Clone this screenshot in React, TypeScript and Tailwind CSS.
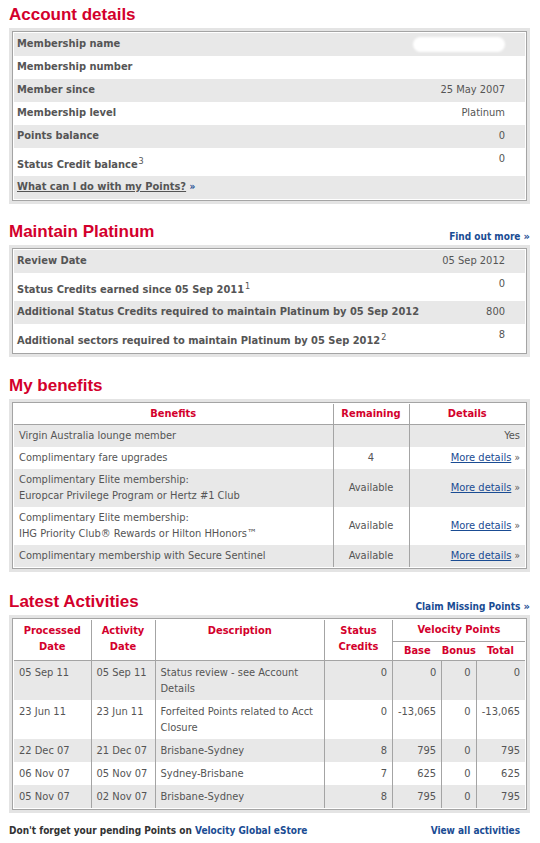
import type { ReactNode } from "react";

const font = { fontFamily: '"DejaVu Sans Condensed", "DejaVu Sans", Tahoma, sans-serif' };

function Heading({ children, link }: { children: ReactNode; link?: string }) {
  return (
    <div className="flex items-end justify-between">
      <h2 className="text-[17px] font-bold leading-5 text-[#d3002c]" style={{ fontFamily: '"Liberation Sans", Arial, sans-serif' }}>
        {children}
      </h2>
      {link && (
        <a className="mb-[-3px] text-[10px] font-bold text-[#1a4c93]">
          {link} <span className="text-[11px]">»</span>
        </a>
      )}
    </div>
  );
}

function Frame({ children }: { children: ReactNode }) {
  return (
    <div className="mt-[3px] bg-[#e4e4e4] p-[3px]">
      <div className="border border-[#a4a4a4] bg-white p-px">{children}</div>
    </div>
  );
}

function KeyRow({ label, value, sup, i, tall }: { label: ReactNode; value?: ReactNode; sup?: string; i: number; tall?: boolean }) {
  return (
    <div className={`flex justify-between pl-[3px] pr-5 ${i % 2 === 0 ? "bg-[#e8e8e8]" : "bg-white"} ${tall ? "h-[28px]" : "h-[23px]"}`}>
      <div className={`font-bold ${tall ? "self-end pb-[3px]" : "pt-[3px]"}`}>
        {label}
        {sup && <sup className="ml-px text-[9px] font-normal">{sup}</sup>}
      </div>
      <div className="pt-[3px]">{value}</div>
    </div>
  );
}

const more = (
  <span>
    <a className="text-[#1a4c93] underline">More details</a> <span className="text-[10px]">»</span>
  </span>
);

const benefits = [
  { b: "Virgin Australia lounge member", r: "", d: <span>Yes</span> },
  { b: "Complimentary fare upgrades", r: "4", d: more },
  { b: <>Complimentary Elite membership:<br />Europcar Privilege Program or Hertz #1 Club</>, r: "Available", d: more },
  { b: <>Complimentary Elite membership:<br />IHG Priority Club® Rewards or Hilton HHonors™</>, r: "Available", d: more },
  { b: "Complimentary membership with Secure Sentinel", r: "Available", d: more },
];

const activities = [
  { p: "05 Sep 11", a: "05 Sep 11", d: "Status review - see Account Details", s: "0", base: "0", bonus: "0", total: "0" },
  { p: "23 Jun 11", a: "23 Jun 11", d: "Forfeited Points related to Acct Closure", s: "0", base: "-13,065", bonus: "0", total: "-13,065" },
  { p: "22 Dec 07", a: "21 Dec 07", d: "Brisbane-Sydney", s: "8", base: "795", bonus: "0", total: "795" },
  { p: "06 Nov 07", a: "05 Nov 07", d: "Sydney-Brisbane", s: "7", base: "625", bonus: "0", total: "625" },
  { p: "05 Nov 07", a: "02 Nov 07", d: "Brisbane-Sydney", s: "8", base: "795", bonus: "0", total: "795" },
];

const cell = "border-l border-[#a4a4a4] px-[5px] pt-[4px] pb-[3px] text-right align-top";

export default function App() {
  return (
    <div className="min-h-[843px] bg-white pl-[9px] pr-[10px] pt-[5px] text-[11px] leading-4 text-[#555]" style={font}>
      <Heading>Account details</Heading>
      <Frame>
        <KeyRow i={0} label="Membership name" value={<div className="mt-px h-[15px] w-[92px] rounded-full bg-white blur-[1px]" />} />
        <KeyRow i={1} label="Membership number" />
        <KeyRow i={2} label="Member since" value="25 May 2007" />
        <KeyRow i={3} label="Membership level" value="Platinum" />
        <KeyRow i={4} label="Points balance" value="0" />
        <KeyRow i={5} label="Status Credit balance" sup="3" value="0" tall />
        <KeyRow i={6} label={<span><a className="underline">What can I do with my Points?</a> <span className="text-[10px] text-[#1a4c93]">»</span></span>} />
      </Frame>

      <div className="mt-[18px]">
        <Heading link="Find out more">Maintain Platinum</Heading>
      </div>
      <Frame>
        <KeyRow i={0} label="Review Date" value="05 Sep 2012" />
        <KeyRow i={1} label="Status Credits earned since 05 Sep 2011" sup="1" value="0" tall />
        <KeyRow i={2} label="Additional Status Credits required to maintain Platinum by 05 Sep 2012" value="800" />
        <KeyRow i={3} label="Additional sectors required to maintain Platinum by 05 Sep 2012" sup="2" value="8" tall />
      </Frame>

      <div className="mt-[19px]">
        <Heading>My benefits</Heading>
      </div>
      <Frame>
        <table className="w-full border-collapse">
          <thead>
            <tr className="h-[20px] border-b border-[#a4a4a4] text-[#d3002c]">
              <th className="p-0 font-bold">Benefits</th>
              <th className="w-[76px] border-l border-[#a4a4a4] p-0 font-bold">Remaining</th>
              <th className="w-[116px] border-l border-[#a4a4a4] p-0 font-bold">Details</th>
            </tr>
          </thead>
          <tbody>
            {benefits.map((r, i) => (
              <tr key={i} className={i % 2 === 0 ? "bg-[#e8e8e8]" : "bg-white"}>
                <td className="px-[5px] py-[3px] align-middle">{r.b}</td>
                <td className="border-l border-[#a4a4a4] p-0 text-center">{r.r}</td>
                <td className="border-l border-[#a4a4a4] py-0 pl-0 pr-[5px] text-right">{r.d}</td>
              </tr>
            ))}
          </tbody>
        </table>
      </Frame>

      <div className="mt-[20px]">
        <Heading link="Claim Missing Points">Latest Activities</Heading>
      </div>
      <Frame>
        <table className="w-full border-collapse">
          <thead className="text-[#d3002c]">
            <tr>
              <th rowSpan={2} className="w-[77px] border-b border-[#a4a4a4] px-0 pb-0 pt-[3px] align-top font-bold">Processed<br />Date</th>
              <th rowSpan={2} className="w-[64px] border-b border-l border-[#a4a4a4] px-0 pb-0 pt-[3px] align-top font-bold">Activity<br />Date</th>
              <th rowSpan={2} className="border-b border-l border-[#a4a4a4] px-0 pb-0 pt-[3px] align-top font-bold">Description</th>
              <th rowSpan={2} className="w-[68px] border-b border-l border-[#a4a4a4] px-0 pb-0 pt-[3px] align-top font-bold">Status<br />Credits</th>
              <th colSpan={3} className="h-[22px] border-b border-l border-[#a4a4a4] p-0 font-bold">Velocity Points</th>
            </tr>
            <tr className="h-[19px]">
              <th className="w-[48px] border-b border-l border-[#a4a4a4] p-0 font-bold">Base</th>
              <th className="w-[34px] border-b border-[#a4a4a4] p-0 font-bold">Bonus</th>
              <th className="w-[49px] border-b border-[#a4a4a4] p-0 font-bold">Total</th>
            </tr>
          </thead>
          <tbody>
            {activities.map((r, i) => (
              <tr key={i} className={i % 2 === 0 ? "bg-[#e8e8e8]" : "bg-white"}>
                <td className="px-[5px] pt-[4px] pb-[3px] align-top">{r.p}</td>
                <td className="border-l border-[#a4a4a4] px-[5px] pt-[4px] pb-[3px] align-top">{r.a}</td>
                <td className="border-l border-[#a4a4a4] px-[5px] pt-[4px] pb-[3px] align-top">{r.d}</td>
                <td className={cell}>{r.s}</td>
                <td className={cell}>{r.base}</td>
                <td className={cell}>{r.bonus}</td>
                <td className={cell}>{r.total}</td>
              </tr>
            ))}
          </tbody>
        </table>
      </Frame>

      <div className="mt-[10px] flex justify-between pr-[10px] text-[10px] font-bold">
        <span className="text-[#333]">
          Don't forget your pending Points on <a className="text-[#1a4c93]">Velocity Global eStore</a>
        </span>
        <a className="text-[#1a4c93]">View all activities</a>
      </div>
    </div>
  );
}
